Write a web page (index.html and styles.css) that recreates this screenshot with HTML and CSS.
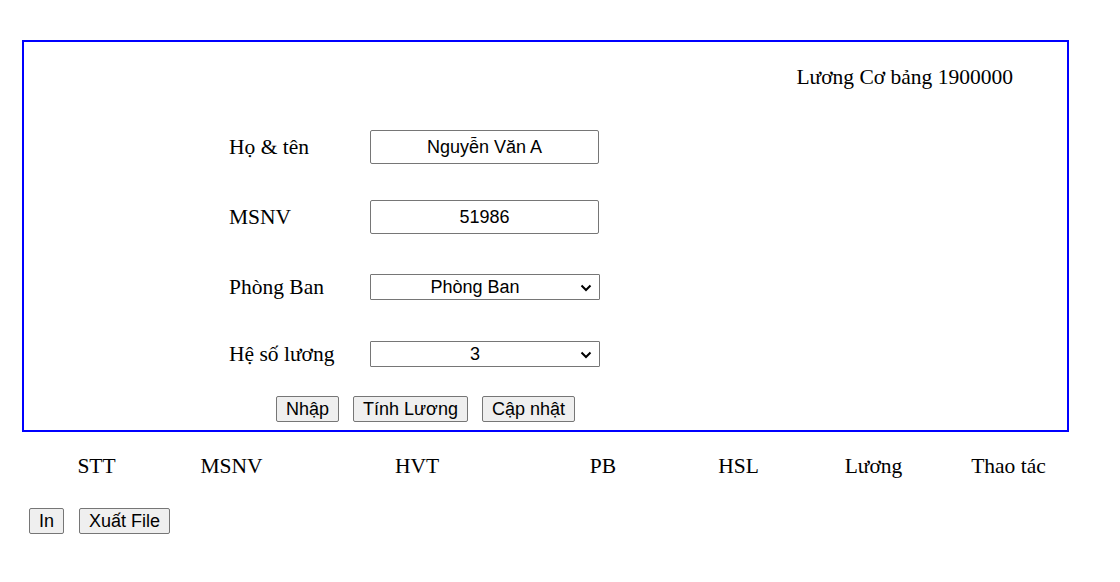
FILE: index.html
```html
<!DOCTYPE html>
<html lang="vi">
<head>
<meta charset="utf-8">
<title>Lương</title>
<link rel="stylesheet" href="styles.css">
</head>
<body>
<div class="panel">
  <div class="base">Lương Cơ bảng 1900000</div>
  <div class="form">
    <div class="row">
      <label class="lbl">Họ &amp; tên</label>
      <input class="field" type="text" value="Nguyễn Văn A">
    </div>
    <div class="row">
      <label class="lbl">MSNV</label>
      <input class="field" type="text" value="51986">
    </div>
    <div class="row">
      <label class="lbl">Phòng Ban</label>
      <span class="sel-wrap">
        <select class="sel"><option>Phòng Ban</option></select>
        <svg class="chev" width="12" height="8" viewBox="0 0 12 8"><path d="M1.5 1.5 L6 6 L10.5 1.5" fill="none" stroke="#000" stroke-width="2"/></svg>
      </span>
    </div>
    <div class="row row-last">
      <label class="lbl">Hệ số lương</label>
      <span class="sel-wrap">
        <select class="sel"><option>3</option></select>
        <svg class="chev" width="12" height="8" viewBox="0 0 12 8"><path d="M1.5 1.5 L6 6 L10.5 1.5" fill="none" stroke="#000" stroke-width="2"/></svg>
      </span>
    </div>
  </div>
  <div class="actions">
    <button class="btn">Nhập</button>
    <button class="btn">Tính Lương</button>
    <button class="btn">Cập nhật</button>
  </div>
</div>
<div class="thead">
  <div class="th w135">STT</div>
  <div class="th w135">MSNV</div>
  <div class="th w236">HVT</div>
  <div class="th w136">PB</div>
  <div class="th w135">HSL</div>
  <div class="th w135">Lương</div>
  <div class="th w135">Thao tác</div>
</div>
<div class="bottom">
  <button class="btn">In</button>
  <button class="btn">Xuất File</button>
</div>
</body>
</html>
```
FILE: styles.css
```css
html, body {
  margin: 0;
  padding: 0;
  background: #fff;
}
body {
  font-family: "Liberation Serif", "Times New Roman", serif;
  font-size: 21.5px;
  color: #000;
  padding-top: 40px;
}
.panel {
  margin-left: 22px;
  width: 1043px;
  height: 388px;
  border: 2px solid #0000ff;
}
.base {
  margin-top: 23px;
  text-align: right;
  padding-right: 54px;
  line-height: 25px;
}
.form {
  margin-top: 22px;
  padding-left: 205px;
  display: flex;
  flex-direction: column;
}
.row {
  height: 70px;
  display: flex;
  align-items: center;
}
.row-last {
  height: 64px;
}
.lbl {
  width: 141px;
  line-height: 25px;
}
.field {
  box-sizing: border-box;
  width: 229px;
  height: 34px;
  border: 1px solid #767676;
  border-radius: 2px;
  font-family: "Liberation Sans", Arial, sans-serif;
  font-size: 18px;
  text-align: center;
  color: #000;
  padding: 0 2px;
  margin: 0;
  background: #fff;
}
.sel-wrap {
  position: relative;
  display: inline-block;
}
.sel {
  -webkit-appearance: none;
  appearance: none;
  box-sizing: border-box;
  width: 230px;
  height: 26px;
  border: 1px solid #767676;
  border-radius: 1px;
  background: #fff;
  font-family: "Liberation Sans", Arial, sans-serif;
  font-size: 18px;
  text-align: center;
  text-align-last: center;
  color: #000;
  padding: 0 20px 0 0;
  margin: 0;
}
.chev {
  position: absolute;
  right: 8px;
  top: 10px;
  pointer-events: none;
}
.actions {
  margin-top: 10px;
  padding-left: 252px;
  display: flex;
  gap: 14px;
}
.btn {
  box-sizing: border-box;
  height: 26px;
  padding: 0 9px;
  margin: 0;
  border: 1px solid #767676;
  border-radius: 2px;
  background: #efefef;
  font-family: "Liberation Sans", Arial, sans-serif;
  font-size: 18px;
  color: #000;
  line-height: 22px;
}
.thead {
  margin-top: 22px;
  margin-left: 29px;
  display: flex;
  line-height: 25px;
}
.th {
  text-align: center;
}
.w135 { width: 135px; }
.w136 { width: 136px; }
.w236 { width: 236px; }
.bottom {
  margin-top: 29px;
  margin-left: 29px;
  display: flex;
  gap: 15px;
}
```
